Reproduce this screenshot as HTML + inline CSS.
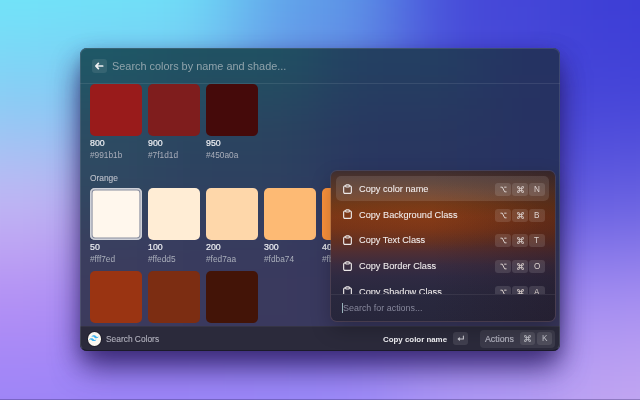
<!DOCTYPE html>
<html><head><meta charset="utf-8"><style>
*{box-sizing:border-box;margin:0;padding:0}
html,body{width:640px;height:400px;overflow:hidden}
body{position:relative;font-family:"Liberation Sans",sans-serif;background:#8aa0f0}
.t{position:absolute;white-space:nowrap;will-change:transform}
.mesh{position:absolute;left:-150px;top:-150px;display:grid;grid-template-columns:230px 160px 160px 160px 230px;grid-template-rows:200px 100px 100px 100px 200px;filter:blur(45px)}
.mesh div,.wmesh div{width:100%;height:100%}
.shadow{position:absolute;left:80px;top:48px;width:480px;height:303px;border-radius:8px;box-shadow:0 18px 30px -2px rgba(35,20,90,0.72), 0 8px 24px 0 rgba(35,20,90,0.28), 0 6px 12px rgba(20,10,60,0.1)}
.win{position:absolute;left:80px;top:48px;width:480px;height:303px;border-radius:7px;overflow:hidden;background:#2c3c60}
.wmesh{position:absolute;left:-100px;top:-100px;display:grid;grid-template-columns:180px 160px 160px 180px;grid-template-rows:150px 120px 120px 150px;filter:blur(35px)}
.wborder{position:absolute;left:80px;top:48px;width:480px;height:303px;border-radius:7px;border:1px solid rgba(120,130,150,0.3);border-bottom-color:rgba(10,8,25,0.45)}
.L{position:absolute;left:0;top:0;width:640px;height:400px}
.sw{position:absolute;width:52px;height:52px;border-radius:5px}
.pop{position:absolute;left:331px;top:170.5px;width:223.5px;height:150px;border-radius:6px;overflow:hidden;
 box-shadow:0 0 0 1px rgba(120,90,80,0.35), 0 8px 20px rgba(0,0,0,0.25);
 background:linear-gradient(180deg,#3e2e31 0px,#4a322c 6px,#5e3826 20px,#703817 34px,#7a3616 46px,#743318 58px,#623022 70px,#4e2e34 82px,#3a2c40 94px,#2f2a42 106px,#29283e 124px,#27263b 150px)}
.key{position:absolute;width:16px;height:13px;border-radius:3px;background:rgba(255,255,255,0.12)}
</style></head><body>
<div class="mesh"><div style="background:#6fe5f9"></div><div style="background:#6fe2f8"></div><div style="background:#5e9ee9"></div><div style="background:#4548d8"></div><div style="background:#3c3dd6"></div><div style="background:#88ccf4"></div><div style="background:#80c0f2"></div><div style="background:#6a88e4"></div><div style="background:#4a4ad8"></div><div style="background:#4444d8"></div><div style="background:#c6b8f2"></div><div style="background:#b4a8ee"></div><div style="background:#8a7ae4"></div><div style="background:#5852dc"></div><div style="background:#6660e0"></div><div style="background:#b48ef4"></div><div style="background:#a48af4"></div><div style="background:#9a86f4"></div><div style="background:#a08af2"></div><div style="background:#a890f2"></div><div style="background:#9c84f8"></div><div style="background:#9a84f8"></div><div style="background:#9a88f8"></div><div style="background:#b09af4"></div><div style="background:#c4a8f2"></div></div>
<div class="shadow"></div>
<div class="win"><div class="wmesh"><div style="background:#1d5866"></div><div style="background:#1f5262"></div><div style="background:#234062"></div><div style="background:#253262"></div><div style="background:#2e4a62"></div><div style="background:#2c4260"></div><div style="background:#293660"></div><div style="background:#273262"></div><div style="background:#3c3c5e"></div><div style="background:#3a3a5e"></div><div style="background:#38375e"></div><div style="background:#36355a"></div><div style="background:#3c385c"></div><div style="background:#3a385d"></div><div style="background:#39375d"></div><div style="background:#38365a"></div></div>
<div class="L" style="left:-80px;top:-48px">
<div style="position:absolute;left:80px;top:83px;width:480px;height:1px;background:rgba(255,255,255,0.09)"></div>
<div style="position:absolute;left:92px;top:58.5px;width:15px;height:14.5px;border-radius:3px;background:rgba(255,255,255,0.09)"></div>
<svg style="position:absolute;left:92px;top:58px" width="15" height="15" viewBox="0 0 15 15"><path d="M10.7 8H4.2M6.4 5.3L3.8 8L6.4 10.7" stroke="#eef0f2" stroke-width="1.7" fill="none" stroke-linecap="round" stroke-linejoin="round"/></svg>
<div class="t" style="left:112px;top:59.96px;font-size:10.9px;line-height:12.535px;color:#8fa3ab;font-weight:400;">Search colors by name and shade...</div>
<div class="sw" style="left:90px;top:84px;background:#991b1b"></div>
<div class="t" style="left:90px;top:137.89px;font-size:8.8px;line-height:10.12px;color:#eceef2;font-weight:400;-webkit-text-stroke:0.2px #eceef2">800</div>
<div class="t" style="left:90px;top:151.35px;font-size:8.3px;line-height:9.545px;color:#a9aeba;font-weight:400;">#991b1b</div>
<div class="sw" style="left:148px;top:84px;background:#7f1d1d"></div>
<div class="t" style="left:148px;top:137.89px;font-size:8.8px;line-height:10.12px;color:#eceef2;font-weight:400;-webkit-text-stroke:0.2px #eceef2">900</div>
<div class="t" style="left:148px;top:151.35px;font-size:8.3px;line-height:9.545px;color:#a9aeba;font-weight:400;">#7f1d1d</div>
<div class="sw" style="left:206px;top:84px;background:#450a0a"></div>
<div class="t" style="left:206px;top:137.89px;font-size:8.8px;line-height:10.12px;color:#eceef2;font-weight:400;-webkit-text-stroke:0.2px #eceef2">950</div>
<div class="t" style="left:206px;top:151.35px;font-size:8.3px;line-height:9.545px;color:#a9aeba;font-weight:400;">#450a0a</div>
<div class="t" style="left:90px;top:174.26px;font-size:8.4px;line-height:9.66px;color:#bcc0ca;font-weight:400;-webkit-text-stroke:0.1px #bcc0ca">Orange</div>
<div class="sw" style="left:90px;top:188px;background:#fff7ed;box-shadow:inset 0 0 0 1.6px #cfd1d8, inset 0 0 0 2.6px #8a8fa0"></div>
<div class="t" style="left:90px;top:241.89px;font-size:8.8px;line-height:10.12px;color:#eceef2;font-weight:400;-webkit-text-stroke:0.2px #eceef2">50</div>
<div class="t" style="left:90px;top:255.35px;font-size:8.3px;line-height:9.545px;color:#a9aeba;font-weight:400;">#fff7ed</div>
<div class="sw" style="left:148px;top:188px;background:#ffedd5"></div>
<div class="t" style="left:148px;top:241.89px;font-size:8.8px;line-height:10.12px;color:#eceef2;font-weight:400;-webkit-text-stroke:0.2px #eceef2">100</div>
<div class="t" style="left:148px;top:255.35px;font-size:8.3px;line-height:9.545px;color:#a9aeba;font-weight:400;">#ffedd5</div>
<div class="sw" style="left:206px;top:188px;background:#fed7aa"></div>
<div class="t" style="left:206px;top:241.89px;font-size:8.8px;line-height:10.12px;color:#eceef2;font-weight:400;-webkit-text-stroke:0.2px #eceef2">200</div>
<div class="t" style="left:206px;top:255.35px;font-size:8.3px;line-height:9.545px;color:#a9aeba;font-weight:400;">#fed7aa</div>
<div class="sw" style="left:264px;top:188px;background:#fdba74"></div>
<div class="t" style="left:264px;top:241.89px;font-size:8.8px;line-height:10.12px;color:#eceef2;font-weight:400;-webkit-text-stroke:0.2px #eceef2">300</div>
<div class="t" style="left:264px;top:255.35px;font-size:8.3px;line-height:9.545px;color:#a9aeba;font-weight:400;">#fdba74</div>
<div class="sw" style="left:322px;top:188px;background:#fb923c"></div>
<div class="t" style="left:322px;top:241.89px;font-size:8.8px;line-height:10.12px;color:#eceef2;font-weight:400;-webkit-text-stroke:0.2px #eceef2">400</div>
<div class="t" style="left:322px;top:255.35px;font-size:8.3px;line-height:9.545px;color:#a9aeba;font-weight:400;">#fb923c</div>
<div class="sw" style="left:380px;top:188px;background:#f97316"></div>
<div class="t" style="left:380px;top:241.89px;font-size:8.8px;line-height:10.12px;color:#eceef2;font-weight:400;-webkit-text-stroke:0.2px #eceef2">500</div>
<div class="t" style="left:380px;top:255.35px;font-size:8.3px;line-height:9.545px;color:#a9aeba;font-weight:400;">#f97316</div>
<div class="sw" style="left:438px;top:188px;background:#ea580c"></div>
<div class="t" style="left:438px;top:241.89px;font-size:8.8px;line-height:10.12px;color:#eceef2;font-weight:400;-webkit-text-stroke:0.2px #eceef2">600</div>
<div class="t" style="left:438px;top:255.35px;font-size:8.3px;line-height:9.545px;color:#a9aeba;font-weight:400;">#ea580c</div>
<div class="sw" style="left:496px;top:188px;background:#c2410c"></div>
<div class="t" style="left:496px;top:241.89px;font-size:8.8px;line-height:10.12px;color:#eceef2;font-weight:400;-webkit-text-stroke:0.2px #eceef2">700</div>
<div class="t" style="left:496px;top:255.35px;font-size:8.3px;line-height:9.545px;color:#a9aeba;font-weight:400;">#c2410c</div>
<div class="sw" style="left:90px;top:271px;background:#9a3412"></div>
<div class="sw" style="left:148px;top:271px;background:#7c2d12"></div>
<div class="sw" style="left:206px;top:271px;background:#431407"></div>
<div style="position:absolute;left:80px;top:326px;width:480px;height:25px;background:#2b2a3b"></div>
<div style="position:absolute;left:80px;top:326px;width:480px;height:1px;background:rgba(255,255,255,0.05)"></div>
<div style="position:absolute;left:87.5px;top:332px;width:13.5px;height:13.5px;border-radius:50%;background:#fbf7f0;box-shadow:0 0 0 1px rgba(0,0,0,0.25)"></div>
<svg style="position:absolute;left:89.3px;top:334.9px" width="9.8" height="6.6" viewBox="0 0 54 33"><path fill="#3fb3f0" d="M27 0c-7.2 0-11.7 3.6-13.5 10.8 2.7-3.6 5.85-4.95 9.45-4.05 2.054.513 3.522 2.004 5.147 3.653C30.744 13.09 33.808 16.2 40.5 16.2c7.2 0 11.7-3.6 13.5-10.8-2.7 3.6-5.85 4.95-9.45 4.05-2.054-.513-3.522-2.004-5.147-3.653C36.756 3.11 33.692 0 27 0zM13.5 16.2C6.3 16.2 1.8 19.8 0 27c2.7-3.6 5.85-4.95 9.45-4.05 2.054.514 3.522 2.004 5.147 3.653C17.244 29.29 20.308 32.4 27 32.4c7.2 0 11.7-3.6 13.5-10.8-2.7 3.6-5.85 4.95-9.45 4.05-2.054-.513-3.522-2.004-5.147-3.653C23.256 19.31 20.192 16.2 13.5 16.2z"/></svg>
<div class="t" style="left:106px;top:335.26px;font-size:8.4px;line-height:9.66px;color:#b0b0bc;font-weight:400;-webkit-text-stroke:0.12px #b0b0bc">Search Colors</div>
<div class="t" style="left:383px;top:334.72px;font-size:7.9px;line-height:9.085px;color:#f2f2f6;font-weight:700;">Copy color name</div>
<div style="position:absolute;left:453px;top:332px;width:15px;height:13px;border-radius:3px;background:rgba(255,255,255,0.1)"></div>
<svg style="position:absolute;left:453px;top:332px" width="15" height="13" viewBox="0 0 15 13"><path d="M10.4 4V7H5.4M6.5 5.8L5.2 7L6.5 8.2" stroke="#c8c8d0" stroke-width="1.1" fill="none" stroke-linecap="round" stroke-linejoin="round"/></svg>
<div style="position:absolute;left:480px;top:330px;width:75px;height:18px;border-radius:4px;background:rgba(255,255,255,0.08)"></div>
<div class="t" style="left:484.5px;top:333.89px;font-size:8.8px;line-height:10.12px;color:#b0b0bd;font-weight:400;-webkit-text-stroke:0.2px #b0b0bd">Actions</div>
<div class="key" style="left:520px;top:332px;width:15px;background:rgba(255,255,255,0.1)"></div>
<svg style="position:absolute;left:524px;top:335px" width="7" height="7" viewBox="0 0 12 12"><path d="M4 4H8V8H4Z M4 4V2.3A1.7 1.7 0 1 0 2.3 4H4 M8 4V2.3A1.7 1.7 0 1 1 9.7 4H8 M4 8V9.7A1.7 1.7 0 1 1 2.3 8H4 M8 8V9.7A1.7 1.7 0 1 0 9.7 8H8" stroke="#c8c8d0" stroke-width="1.6" fill="none"/></svg>
<div class="key" style="left:537px;top:332px;width:15px;background:rgba(255,255,255,0.1)"></div>
<div class="t" style="left:541.5px;top:334.44px;font-size:8.2px;line-height:9.43px;color:#c4c4cc;font-weight:400;">K</div>
</div></div>
<div class="wborder"></div>
<div class="pop"><div class="L" style="left:-331px;top:-170.5px">
<div style="position:absolute;left:331px;top:170.5px;width:224px;height:150px;background:radial-gradient(ellipse 120px 34px at 95px 46px,rgba(160,70,25,0.28),rgba(160,70,25,0) 100%),linear-gradient(90deg,rgba(30,15,25,0) 0%,rgba(30,15,25,0) 45%,rgba(30,15,25,0.28) 100%)"></div>
<div style="position:absolute;left:336px;top:176px;width:213px;height:25px;border-radius:5px;background:rgba(255,255,255,0.11)"></div>
<div style="position:absolute;left:331px;top:170px;width:224px;height:124px;overflow:hidden"><div class="L" style="left:-331px;top:-170px">
<svg style="position:absolute;left:343px;top:183.6px" width="9" height="10" viewBox="0 0 9 10"><path d="M2.7 1.9H2A1.35 1.35 0 0 0 0.65 3.25V8.05A1.35 1.35 0 0 0 2 9.4H7A1.35 1.35 0 0 0 8.35 8.05V3.25A1.35 1.35 0 0 0 7 1.9H6.3 M3.4 0.9H5.6A0.7 0.7 0 0 1 6.3 1.6V2.3A0.7 0.7 0 0 1 5.6 3H3.4A0.7 0.7 0 0 1 2.7 2.3V1.6A0.7 0.7 0 0 1 3.4 0.9Z" stroke="#ece8e8" stroke-width="1.15" fill="none" stroke-linejoin="round"/></svg>
<div class="t" style="left:358.5px;top:183.92px;font-size:9.2px;line-height:10.58px;color:#f2eeee;font-weight:400;-webkit-text-stroke:0.06px #f2eeee">Copy color name</div>
<div class="key" style="left:495px;top:183.0px"></div>
<svg style="position:absolute;left:500px;top:186.0px" width="7" height="7" viewBox="0 0 12 12"><path d="M0.8 2H4L8 10H11.2 M7.2 2H11.2" stroke="#ddd2cf" stroke-width="1.7" fill="none"/></svg>
<div class="key" style="left:512px;top:183.0px"></div>
<svg style="position:absolute;left:517px;top:186.0px" width="7" height="7" viewBox="0 0 12 12"><path d="M4 4H8V8H4Z M4 4V2.3A1.7 1.7 0 1 0 2.3 4H4 M8 4V2.3A1.7 1.7 0 1 1 9.7 4H8 M4 8V9.7A1.7 1.7 0 1 1 2.3 8H4 M8 8V9.7A1.7 1.7 0 1 0 9.7 8H8" stroke="#ddd2cf" stroke-width="1.6" fill="none"/></svg>
<div class="key" style="left:529px;top:183.0px"></div>
<div class="t" style="left:533.5px;top:184.94px;font-size:8.2px;line-height:9.43px;color:#ddd2cf;font-weight:400;">N</div>
<svg style="position:absolute;left:343px;top:209.25px" width="9" height="10" viewBox="0 0 9 10"><path d="M2.7 1.9H2A1.35 1.35 0 0 0 0.65 3.25V8.05A1.35 1.35 0 0 0 2 9.4H7A1.35 1.35 0 0 0 8.35 8.05V3.25A1.35 1.35 0 0 0 7 1.9H6.3 M3.4 0.9H5.6A0.7 0.7 0 0 1 6.3 1.6V2.3A0.7 0.7 0 0 1 5.6 3H3.4A0.7 0.7 0 0 1 2.7 2.3V1.6A0.7 0.7 0 0 1 3.4 0.9Z" stroke="#ece8e8" stroke-width="1.15" fill="none" stroke-linejoin="round"/></svg>
<div class="t" style="left:358.5px;top:209.57px;font-size:9.2px;line-height:10.58px;color:#f2eeee;font-weight:400;-webkit-text-stroke:0.06px #f2eeee">Copy Background Class</div>
<div class="key" style="left:495px;top:208.65px"></div>
<svg style="position:absolute;left:500px;top:211.65px" width="7" height="7" viewBox="0 0 12 12"><path d="M0.8 2H4L8 10H11.2 M7.2 2H11.2" stroke="#ddd2cf" stroke-width="1.7" fill="none"/></svg>
<div class="key" style="left:512px;top:208.65px"></div>
<svg style="position:absolute;left:517px;top:211.65px" width="7" height="7" viewBox="0 0 12 12"><path d="M4 4H8V8H4Z M4 4V2.3A1.7 1.7 0 1 0 2.3 4H4 M8 4V2.3A1.7 1.7 0 1 1 9.7 4H8 M4 8V9.7A1.7 1.7 0 1 1 2.3 8H4 M8 8V9.7A1.7 1.7 0 1 0 9.7 8H8" stroke="#ddd2cf" stroke-width="1.6" fill="none"/></svg>
<div class="key" style="left:529px;top:208.65px"></div>
<div class="t" style="left:533.5px;top:210.59px;font-size:8.2px;line-height:9.43px;color:#ddd2cf;font-weight:400;">B</div>
<svg style="position:absolute;left:343px;top:234.9px" width="9" height="10" viewBox="0 0 9 10"><path d="M2.7 1.9H2A1.35 1.35 0 0 0 0.65 3.25V8.05A1.35 1.35 0 0 0 2 9.4H7A1.35 1.35 0 0 0 8.35 8.05V3.25A1.35 1.35 0 0 0 7 1.9H6.3 M3.4 0.9H5.6A0.7 0.7 0 0 1 6.3 1.6V2.3A0.7 0.7 0 0 1 5.6 3H3.4A0.7 0.7 0 0 1 2.7 2.3V1.6A0.7 0.7 0 0 1 3.4 0.9Z" stroke="#ece8e8" stroke-width="1.15" fill="none" stroke-linejoin="round"/></svg>
<div class="t" style="left:358.5px;top:235.22px;font-size:9.2px;line-height:10.58px;color:#f2eeee;font-weight:400;-webkit-text-stroke:0.06px #f2eeee">Copy Text Class</div>
<div class="key" style="left:495px;top:234.3px"></div>
<svg style="position:absolute;left:500px;top:237.3px" width="7" height="7" viewBox="0 0 12 12"><path d="M0.8 2H4L8 10H11.2 M7.2 2H11.2" stroke="#ddd2cf" stroke-width="1.7" fill="none"/></svg>
<div class="key" style="left:512px;top:234.3px"></div>
<svg style="position:absolute;left:517px;top:237.3px" width="7" height="7" viewBox="0 0 12 12"><path d="M4 4H8V8H4Z M4 4V2.3A1.7 1.7 0 1 0 2.3 4H4 M8 4V2.3A1.7 1.7 0 1 1 9.7 4H8 M4 8V9.7A1.7 1.7 0 1 1 2.3 8H4 M8 8V9.7A1.7 1.7 0 1 0 9.7 8H8" stroke="#ddd2cf" stroke-width="1.6" fill="none"/></svg>
<div class="key" style="left:529px;top:234.3px"></div>
<div class="t" style="left:533.5px;top:236.24px;font-size:8.2px;line-height:9.43px;color:#ddd2cf;font-weight:400;">T</div>
<svg style="position:absolute;left:343px;top:260.55px" width="9" height="10" viewBox="0 0 9 10"><path d="M2.7 1.9H2A1.35 1.35 0 0 0 0.65 3.25V8.05A1.35 1.35 0 0 0 2 9.4H7A1.35 1.35 0 0 0 8.35 8.05V3.25A1.35 1.35 0 0 0 7 1.9H6.3 M3.4 0.9H5.6A0.7 0.7 0 0 1 6.3 1.6V2.3A0.7 0.7 0 0 1 5.6 3H3.4A0.7 0.7 0 0 1 2.7 2.3V1.6A0.7 0.7 0 0 1 3.4 0.9Z" stroke="#ece8e8" stroke-width="1.15" fill="none" stroke-linejoin="round"/></svg>
<div class="t" style="left:358.5px;top:260.87px;font-size:9.2px;line-height:10.58px;color:#f2eeee;font-weight:400;-webkit-text-stroke:0.06px #f2eeee">Copy Border Class</div>
<div class="key" style="left:495px;top:259.95px"></div>
<svg style="position:absolute;left:500px;top:262.95px" width="7" height="7" viewBox="0 0 12 12"><path d="M0.8 2H4L8 10H11.2 M7.2 2H11.2" stroke="#ddd2cf" stroke-width="1.7" fill="none"/></svg>
<div class="key" style="left:512px;top:259.95px"></div>
<svg style="position:absolute;left:517px;top:262.95px" width="7" height="7" viewBox="0 0 12 12"><path d="M4 4H8V8H4Z M4 4V2.3A1.7 1.7 0 1 0 2.3 4H4 M8 4V2.3A1.7 1.7 0 1 1 9.7 4H8 M4 8V9.7A1.7 1.7 0 1 1 2.3 8H4 M8 8V9.7A1.7 1.7 0 1 0 9.7 8H8" stroke="#ddd2cf" stroke-width="1.6" fill="none"/></svg>
<div class="key" style="left:529px;top:259.95px"></div>
<div class="t" style="left:533.5px;top:261.89px;font-size:8.2px;line-height:9.43px;color:#ddd2cf;font-weight:400;">O</div>
<svg style="position:absolute;left:343px;top:286.20000000000005px" width="9" height="10" viewBox="0 0 9 10"><path d="M2.7 1.9H2A1.35 1.35 0 0 0 0.65 3.25V8.05A1.35 1.35 0 0 0 2 9.4H7A1.35 1.35 0 0 0 8.35 8.05V3.25A1.35 1.35 0 0 0 7 1.9H6.3 M3.4 0.9H5.6A0.7 0.7 0 0 1 6.3 1.6V2.3A0.7 0.7 0 0 1 5.6 3H3.4A0.7 0.7 0 0 1 2.7 2.3V1.6A0.7 0.7 0 0 1 3.4 0.9Z" stroke="#ece8e8" stroke-width="1.15" fill="none" stroke-linejoin="round"/></svg>
<div class="t" style="left:358.5px;top:286.52px;font-size:9.2px;line-height:10.58px;color:#f2eeee;font-weight:400;-webkit-text-stroke:0.06px #f2eeee">Copy Shadow Class</div>
<div class="key" style="left:495px;top:285.6px"></div>
<svg style="position:absolute;left:500px;top:288.6px" width="7" height="7" viewBox="0 0 12 12"><path d="M0.8 2H4L8 10H11.2 M7.2 2H11.2" stroke="#ddd2cf" stroke-width="1.7" fill="none"/></svg>
<div class="key" style="left:512px;top:285.6px"></div>
<svg style="position:absolute;left:517px;top:288.6px" width="7" height="7" viewBox="0 0 12 12"><path d="M4 4H8V8H4Z M4 4V2.3A1.7 1.7 0 1 0 2.3 4H4 M8 4V2.3A1.7 1.7 0 1 1 9.7 4H8 M4 8V9.7A1.7 1.7 0 1 1 2.3 8H4 M8 8V9.7A1.7 1.7 0 1 0 9.7 8H8" stroke="#ddd2cf" stroke-width="1.6" fill="none"/></svg>
<div class="key" style="left:529px;top:285.6px"></div>
<div class="t" style="left:533.5px;top:287.54px;font-size:8.2px;line-height:9.43px;color:#ddd2cf;font-weight:400;">A</div>
</div></div>
<div style="position:absolute;left:331px;top:294px;width:224px;height:1px;background:rgba(255,255,255,0.07)"></div>
<div style="position:absolute;left:342px;top:302.5px;width:1px;height:10px;background:#9ab4bc"></div>
<div class="t" style="left:343px;top:302.75px;font-size:8.95px;line-height:10.292px;color:#86879b;font-weight:400;">Search for actions...</div>
</div></div>
<div style="position:absolute;left:0;top:399px;width:640px;height:1px;background:rgba(40,30,90,0.32)"></div>
</body></html>
